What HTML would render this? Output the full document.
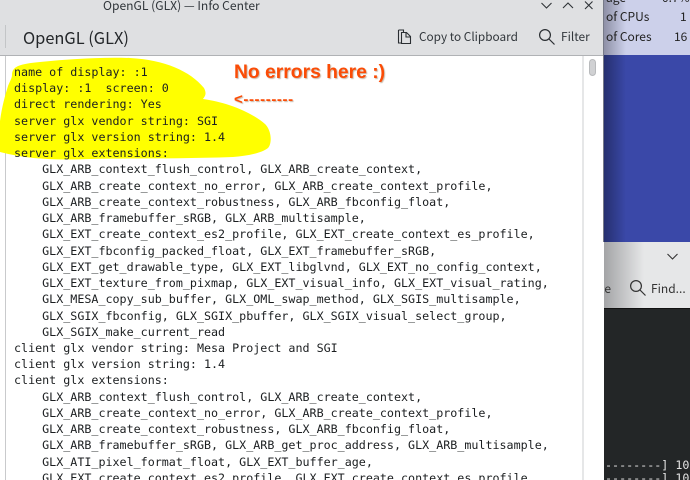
<!DOCTYPE html>
<html>
<head>
<meta charset="utf-8">
<style>
html,body{margin:0;padding:0;width:690px;height:480px;overflow:hidden;background:#fff}
body{position:relative;font-family:"Noto Sans CJK SC","Liberation Sans",sans-serif;color:#232629}
.a{position:absolute;white-space:pre}
.mono{position:absolute;left:14px;top:64px;font-family:"DejaVu Sans Mono","Liberation Mono",monospace;font-size:11.7px;line-height:16.24px;color:#1b1e20;white-space:pre;z-index:3}
</style>
</head>
<body>
<!-- background right side -->
<div class="a" style="left:604px;top:0;width:86px;height:55px;background:#ccd0ea"></div>
<div class="a" style="left:604px;top:55px;width:86px;height:192px;background:#3a48a8"></div>
<div class="a" style="left:604px;top:242px;width:86px;height:67px;background:#e6e7e8"></div>
<div class="a" style="left:602px;top:242px;width:42px;height:67px;background:linear-gradient(90deg,#a0a1a3,#e6e7e8)"></div>
<div class="a" style="left:603px;top:308px;width:87px;height:172px;background:#232627;border-top:1px solid #111"></div>
<div class="a" style="left:604px;top:0;width:22px;height:55px;background:linear-gradient(90deg,#8e90a6,rgba(204,208,234,0))"></div>
<div class="a" style="left:604px;top:55px;width:22px;height:187px;background:linear-gradient(90deg,#26306f,rgba(58,72,168,0))"></div>
<div class="a" style="left:606px;top:-11px;font-size:12px;line-height:17px;color:#222">age</div>
<div class="a" style="left:662px;top:-11px;font-size:12px;line-height:17px;color:#222">0.7%</div>
<div class="a" style="left:606px;top:8px;font-size:12px;line-height:17px;color:#222">of CPUs</div>
<div class="a" style="left:606px;top:28px;font-size:12px;line-height:17px;color:#222">of Cores</div>
<div class="a" style="left:680px;top:8px;font-size:12px;line-height:17px;color:#222">1</div>
<div class="a" style="left:674px;top:28px;font-size:12px;line-height:17px;color:#222">16</div>
<div class="a" style="left:604px;top:280px;font-size:12px;line-height:17px;color:#333;width:7px;overflow:hidden;direction:rtl">ce</div>
<svg class="a" style="left:629px;top:279px" width="18" height="18" viewBox="0 0 18 18" fill="none" stroke="#333" stroke-width="1.2"><circle cx="7" cy="7" r="5.4"/><path d="M11 11l5.5 5.5"/></svg>
<div class="a" style="left:651px;top:280px;font-size:12px;line-height:17px;color:#333">Find...</div>
<svg class="a" style="left:666px;top:252px" width="14" height="10" viewBox="0 0 14 10" fill="none" stroke="#333" stroke-width="1.1"><path d="M1.500 2l5 5 5-5"/></svg>
<div class="a" style="left:605px;top:459px;font-family:'DejaVu Sans Mono',monospace;font-size:11.7px;line-height:13px;color:#e4e4e4;width:85px;overflow:hidden">--------] 10
--------] 10</div>

<!-- main window -->
<div class="a" style="left:0;top:0;width:604px;height:55px;background:#dfe0e2"></div>
<div class="a" style="left:0;top:55px;width:604px;height:1px;background:#b0b2b5"></div>
<div class="a" style="left:0;top:56px;width:604px;height:424px;background:#fff"></div>
<div class="a" style="left:5px;top:25px;width:1px;height:23px;background:#c3c5c7"></div>
<div class="a" style="left:5px;top:56px;width:1px;height:424px;background:#c9cacc"></div>
<div class="a" style="left:582px;top:56px;width:2px;height:424px;background:#e6e7e8"></div>
<div class="a" style="left:603px;top:0;width:1px;height:242px;background:#777a88"></div>
<div class="a" style="left:589px;top:59px;width:7px;height:17px;background:#d0d1d3;border:0.5px solid #b8babc;border-radius:4px;box-sizing:border-box"></div>

<div class="a" style="left:103px;top:-2px;font-size:12.1px;line-height:16px;color:#31363b">OpenGL (GLX) — Info Center</div>
<div class="a" style="left:23px;top:26px;font-size:16.4px;line-height:22px;color:#232629">OpenGL (GLX)</div>

<svg class="a" style="left:396px;top:28px" width="17" height="18" viewBox="0 0 17 18" fill="none" stroke="#2a2e32" stroke-width="1.1"><path d="M2.500 2h5v2.500M2.500 2v13h3"/><path d="M5.500 4.500h5l4 4v7h-9z"/><path d="M10 5v4h4.500"/></svg>
<div class="a" style="left:419px;top:28px;font-size:11.8px;line-height:18px;color:#31363b">Copy to Clipboard</div>
<svg class="a" style="left:538px;top:28px" width="18" height="18" viewBox="0 0 18 18" fill="none" stroke="#2a2e32" stroke-width="1.2"><circle cx="7" cy="7" r="5.400"/><path d="M11 11l5.500 5.500"/></svg>
<div class="a" style="left:561px;top:28px;font-size:11.9px;line-height:18px;color:#31363b">Filter</div>
<svg class="a" style="left:540px;top:0" width="64" height="14" viewBox="0 0 64 14" fill="none" stroke="#2f3337" stroke-width="1.1"><path d="M1.500 3l5 5 5-5"/><path d="M23 8l5-5 5 5"/><path d="M45 1.500l7.500 7.500M52.500 1.500l-7.500 7.500"/></svg>

<!-- yellow highlight -->
<svg class="a" style="left:0;top:56px;z-index:2" width="280" height="105" viewBox="0 0 280 105"><path fill="#ffff00" d="M12 19C12 10 20 8 40 6C70 3 100 1 130 2C165 4 190 15 204 32C207 38 205 40 203 43C225 46 250 55 265 68C272 75 272 88 268 92C260 98 245 100 233 101C180 103 130 102 90 103C60 104 30 104 0 96V65C2 50 5 40 8 30C10 25 12 22 12 19Z"/></svg>

<div class="a" style="left:234px;top:61px;font-family:'Liberation Sans',sans-serif;font-weight:bold;font-size:19.300px;line-height:24px;color:#fb4c06;text-shadow:1px 1px 1px #c9b8a8;z-index:4">No errors here :)</div>
<div class="a" style="left:234px;top:91px;font-family:'Liberation Sans',sans-serif;font-weight:bold;font-size:15px;line-height:18px;color:#fb4c06;letter-spacing:0.6px;text-shadow:1px 1px 1px #c9b8a8;z-index:4">&lt;---------</div>

<div class="mono">name of display: :1
display: :1  screen: 0
direct rendering: Yes
server glx vendor string: SGI
server glx version string: 1.4
server glx extensions:
    GLX_ARB_context_flush_control, GLX_ARB_create_context,
    GLX_ARB_create_context_no_error, GLX_ARB_create_context_profile,
    GLX_ARB_create_context_robustness, GLX_ARB_fbconfig_float,
    GLX_ARB_framebuffer_sRGB, GLX_ARB_multisample,
    GLX_EXT_create_context_es2_profile, GLX_EXT_create_context_es_profile,
    GLX_EXT_fbconfig_packed_float, GLX_EXT_framebuffer_sRGB,
    GLX_EXT_get_drawable_type, GLX_EXT_libglvnd, GLX_EXT_no_config_context,
    GLX_EXT_texture_from_pixmap, GLX_EXT_visual_info, GLX_EXT_visual_rating,
    GLX_MESA_copy_sub_buffer, GLX_OML_swap_method, GLX_SGIS_multisample,
    GLX_SGIX_fbconfig, GLX_SGIX_pbuffer, GLX_SGIX_visual_select_group,
    GLX_SGIX_make_current_read
client glx vendor string: Mesa Project and SGI
client glx version string: 1.4
client glx extensions:
    GLX_ARB_context_flush_control, GLX_ARB_create_context,
    GLX_ARB_create_context_no_error, GLX_ARB_create_context_profile,
    GLX_ARB_create_context_robustness, GLX_ARB_fbconfig_float,
    GLX_ARB_framebuffer_sRGB, GLX_ARB_get_proc_address, GLX_ARB_multisample,
    GLX_ATI_pixel_format_float, GLX_EXT_buffer_age,
    GLX_EXT_create_context_es2_profile, GLX_EXT_create_context_es_profile,</div>
</body>
</html>
